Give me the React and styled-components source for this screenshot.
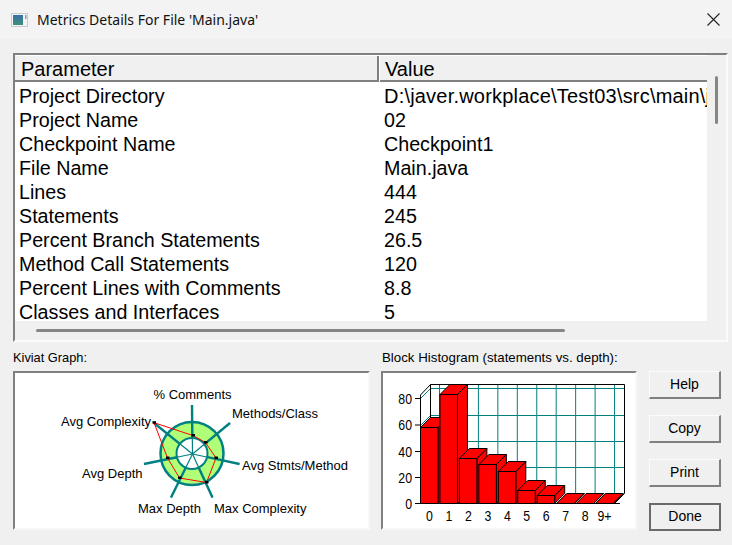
import React from "react";
import styled, { createGlobalStyle } from "styled-components";

const GlobalStyle = createGlobalStyle`
  html, body {
    margin: 0;
    background: #f0f0f0;
    overflow: hidden;
  }
`;

const Window = styled.div`
  width: 732px;
  height: 545px;
  background: #f0f0f0;
  color: #000;
  font-family: "Liberation Sans", Arial, sans-serif;
  display: flex;
  flex-direction: column;
`;

const TitleBar = styled.header`
  height: 39px;
  flex: none;
  background: #f3f3f3;
  display: flex;
  align-items: center;
  padding: 0 12px 0 11px;
`;

const Title = styled.div`
  flex: 1;
  margin-left: 9px;
  font-family: "Noto Sans", sans-serif;
  font-size: 14px;
  color: #111;
`;

const CloseButton = styled.div`
  width: 13px;
  height: 13px;
  display: flex;
`;

const Body = styled.main`
  flex: 1;
  padding: 14px 4px 0 13px;
  display: flex;
  flex-direction: column;
`;

const TableFrame = styled.section`
  height: 289px;
  flex: none;
  box-sizing: border-box;
  border-style: solid;
  border-width: 2px;
  border-color: #808080 #fafafa #fafafa #808080;
  display: grid;
  grid-template-columns: 692px 1fr;
  grid-template-rows: 266px 1fr;
`;

const TableArea = styled.div`
  background: #fff;
  overflow: hidden;
`;

const HeaderRow = styled.div`
  height: 27px;
  box-sizing: border-box;
  background: #f0f0f0;
  border-top: 1px solid #fff;
  border-bottom: 2px solid #808080;
  display: grid;
  grid-template-columns: 362px 1fr;
`;

const HeaderCell = styled.div`
  font-size: 20px;
  line-height: 26px;
  padding-left: 6px;
  white-space: nowrap;
  & + & {
    border-left: 2px solid #808080;
    padding-left: 6px;
    box-shadow: inset 1px 0 0 #fff;
  }
`;

const Rows = styled.div`
  padding-top: 2px;
`;

const Row = styled.div`
  height: 24px;
  display: grid;
  grid-template-columns: 365px 1fr;
  padding-left: 4px;
  font-size: 19.7px;
  line-height: 24px;
  white-space: nowrap;
`;

const Cell = styled.div`
  overflow: hidden;
  font-size: ${({ $long }) => ($long ? "20px" : "inherit")};
  letter-spacing: ${({ $long }) => ($long ? "0.2px" : "normal")};
`;

const VerticalTrack = styled.div`
  padding: 21px 0 0 8px;
`;

const VerticalThumb = styled.div`
  width: 3px;
  height: 48px;
  background: #868686;
  border-radius: 2px;
`;

const HorizontalTrack = styled.div`
  padding: 8px 0 0 21px;
`;

const HorizontalThumb = styled.div`
  width: 529px;
  height: 3px;
  background: #868686;
  border-radius: 2px;
`;

const Lower = styled.div`
  display: grid;
  grid-template-columns: 357px 256px 1fr;
  column-gap: 11px;
  margin-top: 9px;
`;

const PanelLabel = styled.div`
  font-size: ${({ $size }) => $size}px;
  line-height: 14px;
  height: 20px;
  padding-left: ${({ $inset }) => $inset || 0}px;
  white-space: nowrap;
`;

const ChartBox = styled.div`
  height: 159px;
  box-sizing: border-box;
  background: #fff;
  border-style: solid;
  border-width: 2px;
  border-color: #808080 #f8f8f8 #f8f8f8 #808080;
  overflow: hidden;
  svg {
    display: block;
  }
  text {
    font-family: "Liberation Sans", Arial, sans-serif;
    font-size: 13px;
    fill: #000;
  }
  .axis {
    font-size: 14px;
  }
`;

const Buttons = styled.div`
  padding: 20px 0 0 1px;
  display: flex;
  flex-direction: column;
  gap: 16px;
`;

const DialogButton = styled.button`
  width: 72px;
  height: 28px;
  padding: 0 0 2px;
  box-sizing: border-box;
  background: #f0f0f0;
  font-family: inherit;
  font-size: 14px;
  color: #000;
  border-style: solid;
  border-width: ${({ $primary }) => ($primary ? "2px" : "1px 2px 2px 1px")};
  border-color: ${({ $primary }) =>
    $primary ? "#6a6a6a" : "#fcfcfc #808080 #808080 #fcfcfc"};
`;

const rows = [
  ["Project Directory", "D:\\javer.workplace\\Test03\\src\\main\\java"],
  ["Project Name", "02"],
  ["Checkpoint Name", "Checkpoint1"],
  ["File Name", "Main.java"],
  ["Lines", "444"],
  ["Statements", "245"],
  ["Percent Branch Statements", "26.5"],
  ["Method Call Statements", "120"],
  ["Percent Lines with Comments", "8.8"],
  ["Classes and Interfaces", "5"],
];

function WindowIcon() {
  return (
    <svg width="17" height="14" viewBox="0 0 17 14">
      <defs>
        <linearGradient id="windowFill" x1="0" y1="0" x2="0" y2="1">
          <stop offset="0" stopColor="#3a6ea8" />
          <stop offset="1" stopColor="#3f8f7a" />
        </linearGradient>
      </defs>
      <rect x="0.5" y="0.5" width="16" height="13" fill="#f2f4f5" stroke="#c8ccd0" />
      <rect x="2" y="2" width="10" height="10" fill="url(#windowFill)" />
      <rect x="14" y="2" width="1.5" height="4" fill="#8fa0ae" />
    </svg>
  );
}

// coordinates below are page pixels, the viewBox offsets them into the box
const spokes = [
  [192, 405],
  [230, 423],
  [239.5, 464],
  [212.5, 497.5],
  [171, 497.5],
  [144, 464],
  [154, 423],
];

const kiviatPoints = [
  [193, 435.5],
  [205.5, 442.5],
  [216, 458],
  [206.5, 482.5],
  [179.5, 478],
  [167.5, 458],
  [154, 422.7],
];

const kiviatLabels = [
  ["% Comments", 153.5, 399],
  ["Methods/Class", 232, 418],
  ["Avg Stmts/Method", 242, 470],
  ["Max Complexity", 214, 513],
  ["Max Depth", 138, 513],
  ["Avg Depth", 82, 478],
  ["Avg Complexity", 61, 426],
];

const hubX = 192.5;
const hubY = 454;

function KiviatGraph() {
  return (
    <svg width="353" height="155" viewBox="15 373 353 155">
      <circle cx="192" cy="453.5" r="31.5" fill="#b0ff78" stroke="#008080" strokeWidth="2.5" />
      <circle cx="192" cy="453.5" r="15.5" fill="#fff" stroke="#008080" strokeWidth="2" />
      {spokes.map(([x, y]) => (
        <g key={x} stroke="#008080">
          <line x1={hubX} y1={hubY} x2={x} y2={y} strokeWidth="1.2" />
          <line
            x1={hubX + (x - hubX) * 0.32}
            y1={hubY + (y - hubY) * 0.32}
            x2={x}
            y2={y}
            strokeWidth="2.4"
          />
        </g>
      ))}
      <polygon
        points={kiviatPoints.map((p) => p.join(",")).join(" ")}
        fill="none"
        stroke="#ff0000"
        strokeWidth="1"
      />
      {kiviatPoints.map(([x, y]) => (
        <rect key={x} x={x - 1.5} y={y - 1.5} width="3.5" height="2.5" fill="#000" />
      ))}
      {kiviatLabels.map(([label, x, y]) => (
        <text key={label} x={x} y={y}>
          {label}
        </text>
      ))}
    </svg>
  );
}

const barTops = [427.5, 394.5, 458.5, 464.5, 471.5, 490.5, 495.5, 503.5, 503.5, 503.5];
const barLabels = ["0", "1", "2", "3", "4", "5", "6", "7", "8", "9+"];
const ticks = [
  [80, 398.5],
  [60, 425],
  [40, 451.5],
  [20, 477.5],
  [0, 503.5],
];
const gridRows = [388.5, 415.5, 441.5, 467.5];

function Bar({ index, top }) {
  const left = 420.5 + index * 19.45;
  const right = left + 17.5;
  const base = 503.5;
  const d = 10;
  return (
    <g fill="#ff0000" stroke="#000" strokeWidth="1">
      <polygon points={`${right},${top} ${right + d},${top - d} ${right + d},${base - d} ${right},${base}`} />
      <polygon points={`${left},${top} ${left + d},${top - d} ${right + d},${top - d} ${right},${top}`} />
      <rect x={left} y={top} width={right - left} height={base - top} />
    </g>
  );
}

function BlockHistogram() {
  const columns = Array.from({ length: 10 }, (_, i) => 439.5 + i * 19.45);
  return (
    <svg width="252" height="155" viewBox="383 373 252 155">
      <g stroke="#008080" strokeWidth="1">
        {gridRows.map((y) => (
          <line key={y} x1="430.5" y1={y} x2="624" y2={y} />
        ))}
        {columns.map((x) => (
          <line key={x} x1={x} y1="384.5" x2={x} y2="493.5" />
        ))}
        {gridRows.slice(0, 2).map((y) => (
          <line key={y} x1="420.5" y1={y + 10} x2="430.5" y2={y} />
        ))}
      </g>
      <g stroke="#000" strokeWidth="1" fill="none">
        <polyline points="420.5,503.5 420.5,395 430.5,384.5 624.5,384.5 624.5,493.5 614.5,503.5" />
        <line x1="430.5" y1="384.5" x2="430.5" y2="493.5" />
        <line x1="415" y1="503.5" x2="620" y2="503.5" />
        {ticks.map(([value, y]) => (
          <line key={value} x1="415" y1={y} x2="420.5" y2={y} />
        ))}
      </g>
      {barTops.map((top, i) => (
        <Bar key={i} index={i} top={top} />
      ))}
      {ticks.map(([value, y]) => (
        <text
          key={value}
          className="axis"
          transform={`translate(412 ${y + 5}) scale(0.88 1)`}
          textAnchor="end"
        >
          {value}
        </text>
      ))}
      {barLabels.map((label, i) => (
        <text
          key={label}
          className="axis"
          transform={`translate(${429.5 + i * 19.45} 521) scale(0.88 1)`}
          textAnchor="middle"
        >
          {label}
        </text>
      ))}
    </svg>
  );
}

export default function App() {
  return (
    <Window>
      <GlobalStyle />
      <TitleBar>
        <WindowIcon />
        <Title>Metrics Details For File 'Main.java'</Title>
        <CloseButton>
          <svg width="13" height="13" viewBox="0 0 13 13">
            <path d="M0.5 0.5 L12.5 12.5 M12.5 0.5 L0.5 12.5" stroke="#222" strokeWidth="1.1" fill="none" />
          </svg>
        </CloseButton>
      </TitleBar>
      <Body>
        <TableFrame>
          <TableArea>
            <HeaderRow>
              <HeaderCell>Parameter</HeaderCell>
              <HeaderCell>Value</HeaderCell>
            </HeaderRow>
            <Rows>
              {rows.map(([name, value]) => (
                <Row key={name}>
                  <Cell>{name}</Cell>
                  <Cell $long={value.length > 20}>{value}</Cell>
                </Row>
              ))}
            </Rows>
          </TableArea>
          <VerticalTrack>
            <VerticalThumb />
          </VerticalTrack>
          <HorizontalTrack>
            <HorizontalThumb />
          </HorizontalTrack>
        </TableFrame>
        <Lower>
          <div>
            <PanelLabel $size={12.8}>Kiviat Graph:</PanelLabel>
            <ChartBox>
              <KiviatGraph />
            </ChartBox>
          </div>
          <div>
            <PanelLabel $size={13.3} $inset={1}>
              Block Histogram (statements vs. depth):
            </PanelLabel>
            <ChartBox>
              <BlockHistogram />
            </ChartBox>
          </div>
          <Buttons>
            <DialogButton>Help</DialogButton>
            <DialogButton>Copy</DialogButton>
            <DialogButton>Print</DialogButton>
            <DialogButton $primary>Done</DialogButton>
          </Buttons>
        </Lower>
      </Body>
    </Window>
  );
}
